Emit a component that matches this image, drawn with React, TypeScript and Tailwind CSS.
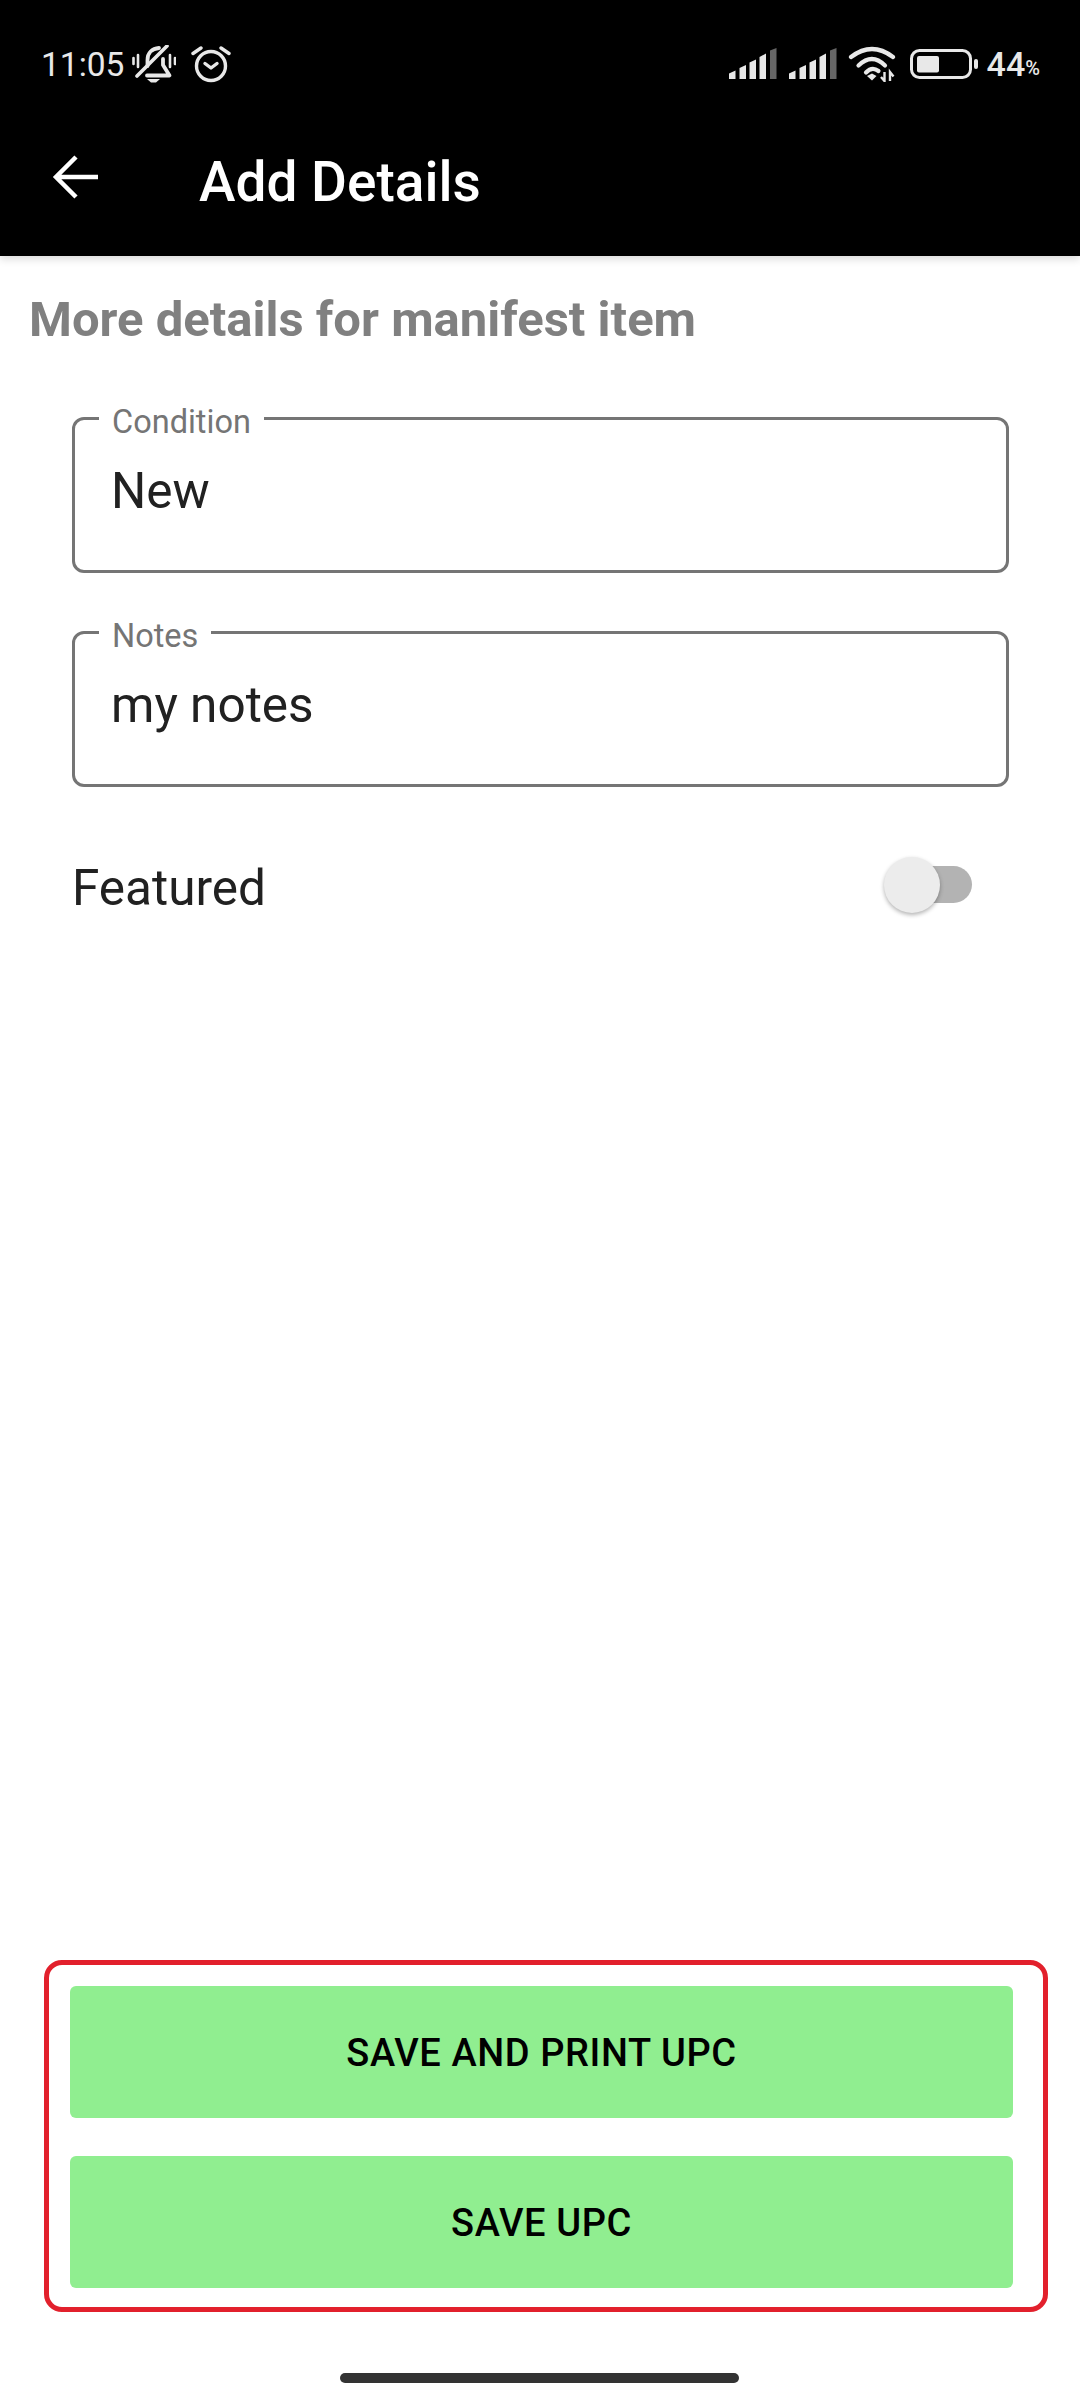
function Bell() {
  return (
    <svg width="44" height="38" viewBox="0 0 44 38" fill="none" className="shrink-0">
      <g stroke="#e8e8e8" strokeLinecap="round">
        <path d="M1.5 13v6M6 10v12M38 10v12M43 13v6" strokeWidth="2.6" />
        <path d="M5 31 35 1" strokeWidth="3.6" />
        <path d="M15.5 21v-6C15.5 8 20 3.5 27 3" strokeWidth="3.8" />
        <path d="M31 14v6l6.5 10.5H15" strokeWidth="3.8" strokeLinejoin="round" />
      </g>
      <path d="M15 34h13l-4 3.5h-5z" fill="#e8e8e8" />
    </svg>
  );
}

function Alarm() {
  return (
    <svg width="40" height="38" viewBox="0 0 40 38" fill="none" className="shrink-0">
      <g stroke="#e8e8e8" strokeWidth="3.4" strokeLinecap="round" strokeLinejoin="round">
        <circle cx="20" cy="21" r="14.5" />
        <path d="M2 8.5 10 3M38 8.5 30 3" />
        <path d="M14 18.5l6 4.5 6-4.5" />
      </g>
    </svg>
  );
}

function Signal() {
  return (
    <svg width="48" height="32" viewBox="0 0 48 32" className="shrink-0">
      <path d="M0 25.5 6.5 22.5V31H0Z" fill="#e8e8e8" />
      <path d="M10.5 20 17 17V31H10.5Z" fill="#e8e8e8" />
      <path d="M20.5 14.5 27 11.5V31H20.5Z" fill="#e8e8e8" />
      <path d="M30.5 9 37 5.5V31H30.5Z" fill="#e8e8e8" />
      <path d="M41 2.5 47.5 0V31H41Z" fill="#666666" />
    </svg>
  );
}

function Wifi() {
  return (
    <svg width="48" height="36" viewBox="0 0 48 36" fill="none" className="shrink-0">
      <g stroke="#e8e8e8" strokeWidth="4.2" strokeLinecap="round">
        <path d="M3 11Q24-5 45 11" />
        <path d="M10.5 19.5Q24 6.5 37 19.5" />
        <path d="M18 26.5Q24 20 30.5 25" />
      </g>
      <path d="M19 30l5-2.500 4.500 2.500-4.500 4.500z" fill="#e8e8e8" />
      <path d="M36.500 26v9l-3.500-4M42 35v-9l3.500 4.500" stroke="#e8e8e8" strokeWidth="2.4" />
    </svg>
  );
}

function Battery() {
  return (
    <svg width="68" height="30" viewBox="0 0 68 30" fill="none" className="shrink-0">
      <rect x="1.5" y="1.5" width="59" height="27" rx="8" stroke="#e8e8e8" strokeWidth="3" />
      <rect x="7" y="7" width="22" height="16.500" rx="2" fill="#e8e8e8" />
      <rect x="64" y="10" width="4" height="10" rx="2" fill="#e8e8e8" />
    </svg>
  );
}

function BackArrow() {
  return (
    <svg width="46" height="44" viewBox="0 0 46 44" fill="none" className="shrink-0">
      <path d="M46 22H4M24 2 4 22l20 20" stroke="#ffffff" strokeWidth="4.5" />
    </svg>
  );
}

function Field({ label, value }: { label: string; value: string }) {
  return (
    <div className="relative h-[156px] rounded-[12px] border-[3px] border-[#757575] pl-[36px] pt-[37px] text-[49.5px] leading-[68px] text-[#212121]">
      <span className="absolute left-[24px] top-[-15px] bg-white px-[13px] text-[32.5px] leading-[34px] text-[#757575]">
        {label}
      </span>
      {value}
    </div>
  );
}

function SaveButton({ children }: { children: string }) {
  return (
    <button className="flex h-[132px] w-full items-center justify-center rounded-[6px] bg-[#90ee90] pt-[2px] text-[38px] font-medium tracking-[0.6px] text-black">
      {children}
    </button>
  );
}

export default function App() {
  return (
    <div className="flex h-[2400px] w-[1080px] flex-col overflow-hidden bg-white font-['Roboto',sans-serif]">
      <header className="relative z-10 h-[256px] shrink-0 bg-black shadow-[0_3px_8px_rgba(0,0,0,0.15)]">
        <div className="flex h-[126px] items-center pl-[41px] pr-[40px] pt-[2px]">
          <span className="pt-[2px] text-[33.5px] leading-none text-[#e8e8e8]">11:05</span>
          <span className="ml-[8px] flex"><Bell /></span>
          <span className="ml-[15px] flex"><Alarm /></span>
          <div className="ml-auto flex items-center">
            <Signal />
            <span className="ml-[12px] flex"><Signal /></span>
            <span className="ml-[11px] flex"><Wifi /></span>
            <span className="ml-[14px] flex"><Battery /></span>
            <span className="ml-[9px] text-[34px] font-medium leading-none text-[#e8e8e8]">44</span>
            <span className="mt-[8px] text-[20px] font-medium leading-none text-[#e8e8e8]">%</span>
          </div>
        </div>
        <div className="flex h-[110px] items-center pb-[8px] pl-[52px]">
          <BackArrow />
          <span className="ml-[101px] mt-[10px] text-[55px] font-medium leading-none text-white">Add Details</span>
        </div>
      </header>

      <main className="flex flex-1 flex-col">
        <h1 className="pl-[29px] pt-[36px] text-[49px] font-bold leading-[56px] text-[#808080]">More details for manifest item</h1>
        <div className="mt-[69px] flex flex-col gap-[58px] pl-[72px] pr-[71px]">
          <Field label="Condition" value="New" />
          <Field label="Notes" value="my notes" />
        </div>
        <div className="mt-[67px] flex items-center justify-between pl-[72px] pr-[108px]">
          <span className="pt-[4px] text-[49.5px] leading-[60px] text-[#212121]">Featured</span>
          <div className="relative mb-[4px] h-[37px] w-[84px] rounded-full bg-[#b3b3b3]">
            <span className="absolute left-[-4px] top-[-9px] h-[56px] w-[56px] rounded-full bg-[#ececec] shadow-[0_2px_4px_rgba(0,0,0,0.3)]" />
          </div>
        </div>
      </main>

      <section className="mx-[44px] flex h-[352px] w-[1004px] shrink-0 flex-col gap-[38px] rounded-[18px] border-[5px] border-[#e2202c] pl-[21px] pr-[30px] pt-[21px]">
        <SaveButton>SAVE AND PRINT UPC</SaveButton>
        <SaveButton>SAVE UPC</SaveButton>
      </section>

      <div className="flex h-[88px] shrink-0 items-start justify-center pr-[2px] pt-[61px]">
        <div className="h-[10px] w-[399px] rounded-full bg-[#333333]" />
      </div>
    </div>
  );
}
